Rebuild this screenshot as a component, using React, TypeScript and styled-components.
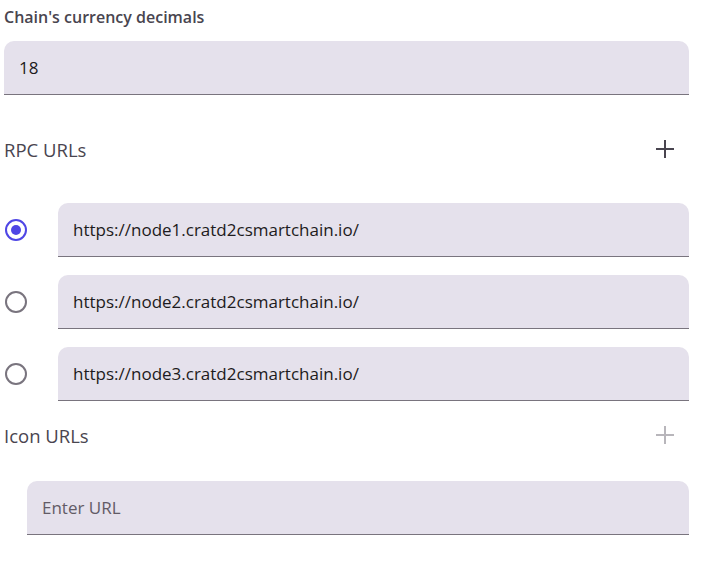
import React, { useState } from 'react';
import styled, { createGlobalStyle } from 'styled-components';

const GlobalStyle = createGlobalStyle`
  body {
    margin: 0;
    background: #ffffff;
    font-family: 'Open Sans', 'Noto Sans', sans-serif;
    color: #1d1b20;
  }
`;

const Page = styled.div`
  width: 715px;
  padding: 0 26px 0 4px;
  box-sizing: border-box;
  display: flex;
  flex-direction: column;
`;

const FieldLabel = styled.label`
  display: block;
  padding-top: 6px;
  height: 41px;
  box-sizing: border-box;
  font-size: 16px;
  font-weight: 600;
  color: #49454f;
`;

const InputBox = styled.input`
  display: block;
  width: 100%;
  height: 54px;
  box-sizing: border-box;
  border: none;
  border-bottom: 1px solid #79747e;
  border-radius: 10px 10px 0 0;
  background: #e5e1ec;
  padding: 0 15px;
  font-family: inherit;
  font-size: 17px;
  color: #1d1b20;
  outline: none;

  &::placeholder {
    color: #625b66;
  }
`;

const SectionHeader = styled.div<{ $top: number }>`
  display: flex;
  align-items: center;
  justify-content: space-between;
  margin-top: ${({ $top }) => $top}px;
  height: 44px;
`;

const SectionTitle = styled.span`
  font-size: 18.5px;
  font-weight: 400;
  color: #49454f;
`;

const AddButton = styled.button<{ $disabled?: boolean }>`
  width: 40px;
  height: 40px;
  margin-right: 4px;
  display: flex;
  align-items: center;
  justify-content: center;
  border: none;
  background: none;
  padding: 0;
  cursor: ${({ $disabled }) => ($disabled ? 'default' : 'pointer')};
  color: ${({ $disabled }) => ($disabled ? '#b8b6bb' : '#49454f')};
`;

const RpcList = styled.div`
  display: flex;
  flex-direction: column;
  gap: 18px;
  margin-top: 32px;
`;

const RpcRow = styled.div`
  display: flex;
  align-items: center;
`;

const RadioSlot = styled.div`
  width: 54px;
  flex-shrink: 0;
  display: flex;
  align-items: center;
`;

const RadioOuter = styled.span<{ $checked: boolean }>`
  width: 22px;
  height: 22px;
  margin-left: 1px;
  border-radius: 50%;
  box-sizing: border-box;
  border: 2.5px solid ${({ $checked }) => ($checked ? '#4f46e5' : '#79747e')};
  display: flex;
  align-items: center;
  justify-content: center;
  cursor: pointer;
`;

const RadioDot = styled.span`
  width: 10px;
  height: 10px;
  border-radius: 50%;
  background: #4f46e5;
`;

const IconInputWrap = styled.div`
  padding-left: 23px;
  margin-top: 24px;
`;

const PlusIcon = ({ size = 20 }: { size?: number }) => (
  <svg width={size} height={size} viewBox="0 0 20 20" fill="none">
    <path d="M10 1v18M1 10h18" stroke="currentColor" strokeWidth="2" />
  </svg>
);

const rpcUrls = [
  'https://node1.cratd2csmartchain.io/',
  'https://node2.cratd2csmartchain.io/',
  'https://node3.cratd2csmartchain.io/',
];

export default function App() {
  const [selected, setSelected] = useState(0);

  return (
    <Page>
      <GlobalStyle />
      <FieldLabel>Chain's currency decimals</FieldLabel>
      <InputBox defaultValue="18" />

      <SectionHeader $top={32}>
        <SectionTitle>RPC URLs</SectionTitle>
        <AddButton>
          <PlusIcon />
        </AddButton>
      </SectionHeader>

      <RpcList>
        {rpcUrls.map((url, i) => (
          <RpcRow key={url}>
            <RadioSlot onClick={() => setSelected(i)}>
              <RadioOuter $checked={selected === i}>
                {selected === i && <RadioDot />}
              </RadioOuter>
            </RadioSlot>
            <InputBox defaultValue={url} />
          </RpcRow>
        ))}
      </RpcList>

      <SectionHeader $top={12}>
        <SectionTitle>Icon URLs</SectionTitle>
        <AddButton $disabled>
          <PlusIcon />
        </AddButton>
      </SectionHeader>

      <IconInputWrap>
        <InputBox placeholder="Enter URL" />
      </IconInputWrap>
    </Page>
  );
}
